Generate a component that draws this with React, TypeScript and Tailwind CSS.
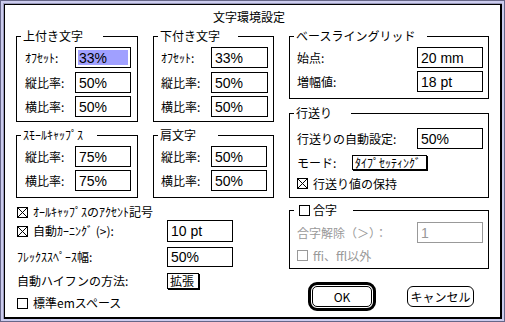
import React from "react";

type FieldProps = { value: string; className: string; selected?: boolean; disabled?: boolean };

function Field({ value, className, selected = false, disabled = false }: FieldProps) {
  return (
    <div className={`flex shrink-0 border bg-white p-[2px] ${disabled ? "border-[#999999]" : "border-black"} ${className}`}>
      <div
        className={`flex flex-1 items-center pl-[1px] font-['Liberation_Sans',sans-serif] text-[14px] leading-none ${
          selected ? "bg-[#a0a0ff]" : ""
        } ${disabled ? "text-[#999999]" : "text-black"}`}
      >
        {value}
      </div>
    </div>
  );
}

function Check({ checked = false, disabled = false }: { checked?: boolean; disabled?: boolean }) {
  return (
    <div className={`h-[11px] w-[11px] shrink-0 border ${disabled ? "border-[#999999]" : "border-black"}`}>
      {checked && (
        <svg className="block" width="9" height="9" viewBox="0 0 9 9" shapeRendering="crispEdges">
          <path d="M0 0L9 9M9 0L0 9" stroke="#000" strokeWidth="1" />
        </svg>
      )}
    </div>
  );
}

function Group({
  label,
  labelW,
  className,
  children,
}: {
  label: React.ReactNode;
  labelW: string;
  className: string;
  children: React.ReactNode;
}) {
  return (
    <div className={`relative border border-black ${className}`}>
      <div className={`absolute left-[4px] top-[-8px] flex h-[14px] items-center bg-white pl-[2px] leading-[14px] ${labelW}`}>
        {label}
      </div>
      {children}
    </div>
  );
}

function PopButton({ label, className }: { label: string; className: string }) {
  return (
    <div className={`flex shrink-0 items-center border border-black bg-white pl-[2px] leading-none shadow-[1px_1px_0_0_#000] ${className}`}>
      {label}
    </div>
  );
}

export default function App() {
  return (
    <div className="h-[322px] w-[505px] border border-[#666688] bg-[#ccccee] p-[2px] font-['Noto_Sans_CJK_JP',sans-serif] text-[12px] text-black">
      <div className="h-full border-l border-t border-[#9999bb]">
        <div className="h-full border-b-2 border-l border-r-2 border-t border-black bg-white pl-[11px] pt-[5px]">
          <div className="h-[14px] pl-[197px] leading-[14px]">文字環境設定</div>

          <div className="mt-[12px] flex">
            {/* left column */}
            <div className="flex w-[258px] flex-col">
              <div className="flex">
                <Group label="上付き文字" labelW="w-[82px]" className="h-[86px] w-[122px] pl-[8px] pr-[6px] pt-[10px]">
                  <div className="flex h-[21px] items-center">
                    <div className="w-[50px]">ｵﾌｾｯﾄ:</div>
                    <Field value="33%" selected className="h-[21px] w-[56px]" />
                  </div>
                  <div className="mt-[4px] flex h-[21px] items-center">
                    <div className="w-[50px]">縦比率:</div>
                    <Field value="50%" className="h-[21px] w-[56px]" />
                  </div>
                  <div className="mt-[3px] flex h-[21px] items-center">
                    <div className="w-[50px]">横比率:</div>
                    <Field value="50%" className="h-[21px] w-[56px]" />
                  </div>
                </Group>
                <Group label="下付き文字" labelW="w-[80px]" className="ml-[15px] h-[86px] w-[121px] pl-[7px] pr-[5px] pt-[10px]">
                  <div className="flex h-[21px] items-center">
                    <div className="w-[50px]">ｵﾌｾｯﾄ:</div>
                    <Field value="33%" className="h-[21px] w-[57px]" />
                  </div>
                  <div className="mt-[4px] flex h-[21px] items-center">
                    <div className="w-[50px]">縦比率:</div>
                    <Field value="50%" className="h-[21px] w-[57px]" />
                  </div>
                  <div className="mt-[3px] flex h-[21px] items-center">
                    <div className="w-[50px]">横比率:</div>
                    <Field value="50%" className="h-[21px] w-[57px]" />
                  </div>
                </Group>
              </div>

              <div className="mt-[13px] flex">
                <Group label="ｽﾓｰﾙｷｬｯﾌﾟｽ" labelW="w-[76px]" className="h-[63px] w-[122px] pl-[8px] pr-[6px] pt-[10px]">
                  <div className="flex h-[21px] items-center">
                    <div className="w-[50px]">縦比率:</div>
                    <Field value="75%" className="h-[21px] w-[56px]" />
                  </div>
                  <div className="mt-[3px] flex h-[21px] items-center">
                    <div className="w-[50px]">横比率:</div>
                    <Field value="75%" className="h-[21px] w-[56px]" />
                  </div>
                </Group>
                <Group label="肩文字" labelW="w-[60px]" className="ml-[15px] h-[63px] w-[121px] pl-[7px] pr-[5px] pt-[10px]">
                  <div className="flex h-[21px] items-center">
                    <div className="w-[50px]">縦比率:</div>
                    <Field value="50%" className="h-[21px] w-[56px]" />
                  </div>
                  <div className="mt-[3px] flex h-[21px] items-center">
                    <div className="w-[50px]">横比率:</div>
                    <Field value="50%" className="h-[21px] w-[56px]" />
                  </div>
                </Group>
              </div>

              <div className="mt-[7px] flex h-[14px] items-center pl-[1px]">
                <Check checked />
                <span className="ml-[5px]">ｵｰﾙｷｬｯﾌﾟｽのｱｸｾﾝﾄ記号</span>
              </div>
              <div className="mt-[1px] flex h-[22px] items-center">
                <div className="flex w-[151px] items-center pl-[1px]">
                  <Check checked />
                  <span className="ml-[5px]">自動ｶｰﾆﾝｸﾞ (&gt;):</span>
                </div>
                <Field value="10 pt" className="h-[22px] w-[66px]" />
              </div>
              <div className="mt-[5px] flex h-[20px] items-center">
                <div className="w-[151px] pl-[1px]">ﾌﾚｯｸｽｽﾍﾟｰｽ幅:</div>
                <Field value="50%" className="h-[20px] w-[66px]" />
              </div>
              <div className="mt-[6px] flex h-[17px] items-start">
                <div className="flex h-[16px] w-[151px] items-center pl-[1px]">自動ハイフンの方法:</div>
                <PopButton label="拡張" className="h-[16px] w-[32px]" />
              </div>
              <div className="mt-[6px] flex h-[14px] items-center pl-[1px]">
                <Check />
                <span className="ml-[5px]">標準emスペース</span>
              </div>
            </div>

            {/* right column */}
            <div className="ml-[15px] flex w-[200px] flex-col">
              <Group label="ベースライングリッド" labelW="w-[133px]" className="h-[63px] w-[200px] pl-[7px] pr-[5px] pt-[10px]">
                <div className="flex h-[21px] items-center">
                  <div className="w-[120px]">始点:</div>
                  <Field value="20 mm" className="h-[21px] w-[66px]" />
                </div>
                <div className="mt-[3px] flex h-[21px] items-center">
                  <div className="w-[120px]">増幅値:</div>
                  <Field value="18 pt" className="h-[21px] w-[66px]" />
                </div>
              </Group>

              <Group label="行送り" labelW="w-[57px]" className="mt-[14px] h-[85px] w-[200px] pl-[7px] pr-[5px] pt-[14px]">
                <div className="flex h-[21px] items-center">
                  <div className="w-[120px]">行送りの自動設定:</div>
                  <Field value="50%" className="h-[21px] w-[66px]" />
                </div>
                <div className="mt-[6px] flex h-[16px] items-start">
                  <div className="flex h-[15px] w-[55px] items-center">モード:</div>
                  <PopButton label="ﾀｲﾌﾟｾｯﾃｨﾝｸﾞ" className="h-[15px] w-[75px]" />
                </div>
                <div className="mt-[6px] flex h-[13px] items-center">
                  <Check checked />
                  <span className="ml-[5px]">行送り値の保持</span>
                </div>
              </Group>

              <Group
                label={
                  <div className="flex items-center pl-[3px]">
                    <Check />
                    <span className="ml-[3px]">合字</span>
                  </div>
                }
                labelW="w-[59px]"
                className="mt-[12px] h-[59px] w-[200px] pl-[7px] pr-[5px] pt-[11px]"
              >
                <div className="flex h-[21px] items-center">
                  <div className="w-[120px] text-[#999999]">合字解除（＞）：</div>
                  <Field value="1" disabled className="h-[21px] w-[66px]" />
                </div>
                <div className="mt-[6px] flex h-[13px] items-center">
                  <Check disabled />
                  <span className="ml-[5px] text-[#999999]">ffi、ffl以外</span>
                </div>
              </Group>

              <div className="mt-[13px] flex items-center pl-[19px]">
                <div className="h-[29px] w-[68px] rounded-[9px] border-[3px] border-black p-[1px]">
                  <div className="flex h-full items-center justify-center rounded-[5px] border border-black leading-none">OK</div>
                </div>
                <div className="ml-[31px] flex h-[21px] w-[67px] items-center justify-center rounded-[6px] border border-black leading-none">
                  キャンセル
                </div>
              </div>
            </div>
          </div>
        </div>
      </div>
    </div>
  );
}
